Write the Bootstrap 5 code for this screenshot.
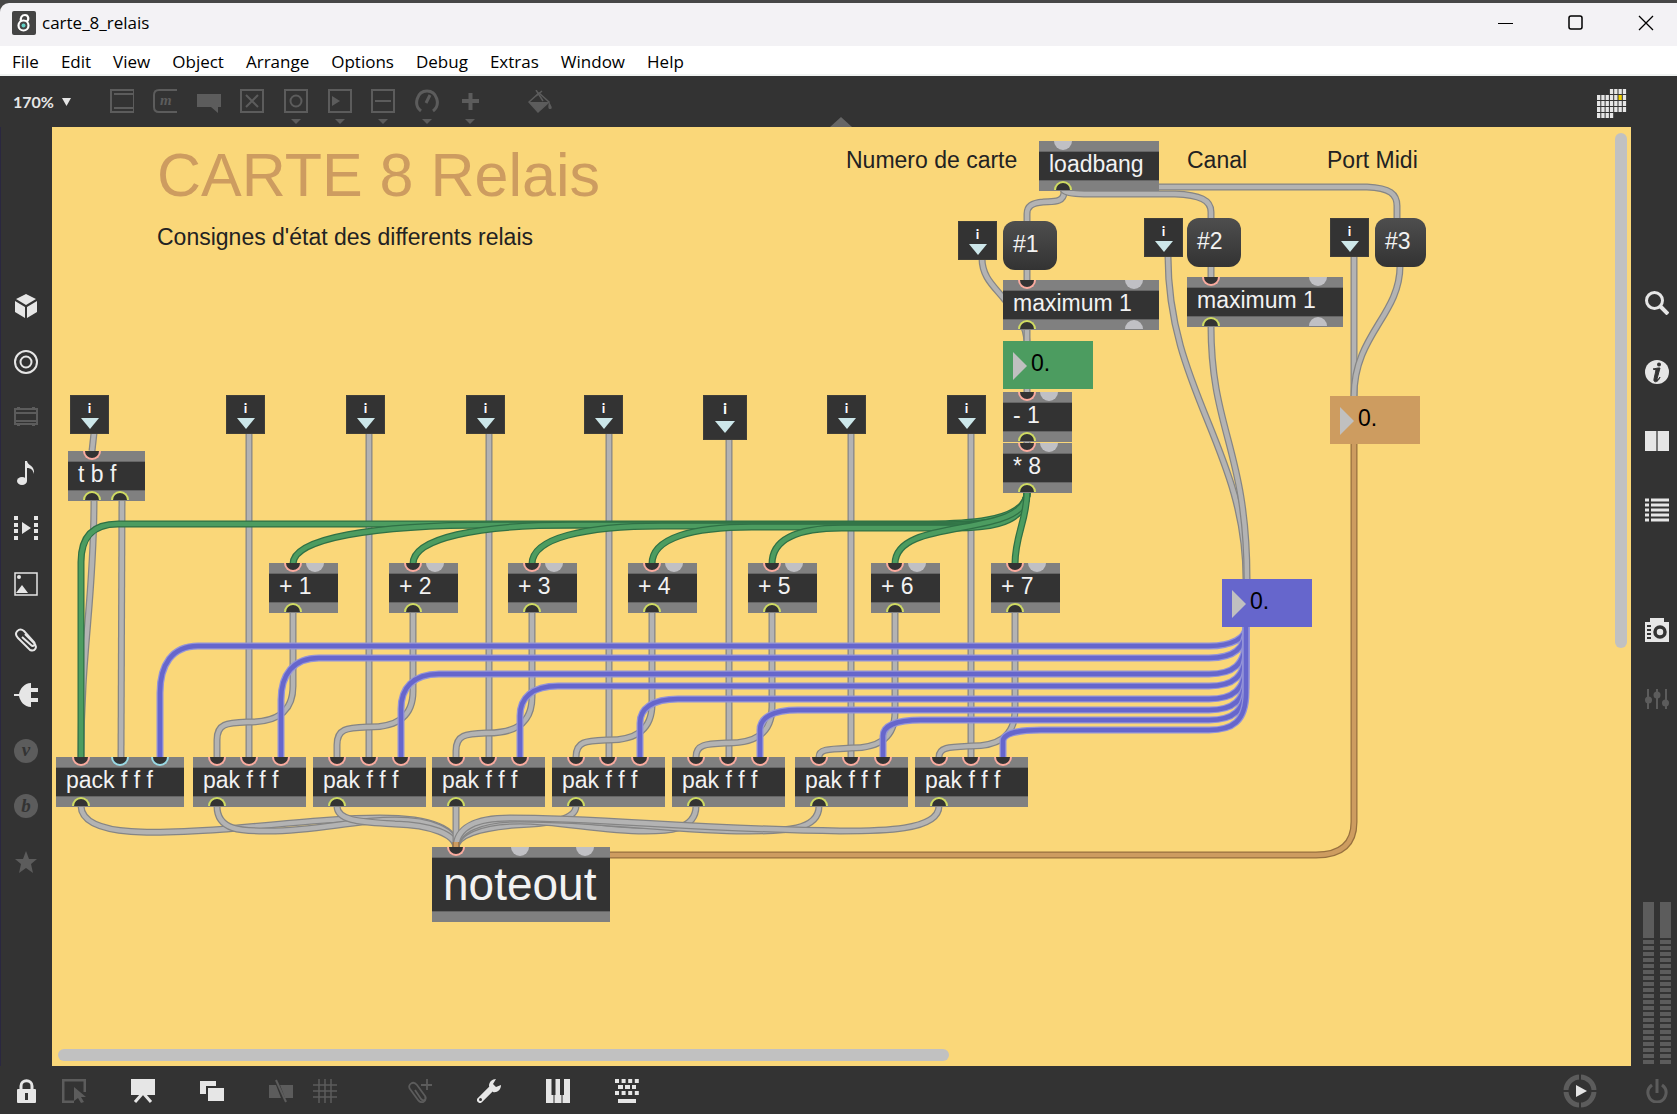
<!DOCTYPE html>
<html lang="fr">
<head>
<meta charset="utf-8">
<meta name="viewport" content="width=device-width, initial-scale=1">
<title>carte_8_relais</title>
<link href="https://cdn.jsdelivr.net/npm/bootstrap@5.3.0/dist/css/bootstrap.min.css" rel="stylesheet">
<style>
:root { --dark:#333; --dim:#5c5c5c; --lit:#e6e6e6; --sand:#fad779; }
body { background:var(--dark); font-family:"Open Sans","Noto Sans",sans-serif; }
svg { display:block; flex:none; }
.desk { background:#474747; padding-top:3px; }
.titlebar { height:43px; background:#f3f2f5; border-top-left-radius:9px; padding:0 0 3px 12px; color:#000; font-size:17px; }
.titlebar span { padding-left:6px; }
.winbtn { width:70px; height:38px; color:#000; }
.winbtn:last-child { width:62px; margin-left:4px; }
.menubar { height:30px; background:#fff; padding-left:1px; border-bottom:2px solid #f0f3f2; }
.menubar a { color:#000; font-size:17px; line-height:24px; padding:4px 11px 0; }
.toolbar { height:51px; }
.zoomctl { padding-left:13px; }
.zoombox { width:44px; padding:0; border:0; background:none; appearance:none; color:var(--lit); font:bold 16px Lato,sans-serif; }
.toolset { width:392px; margin-left:27px; }
.iconbtn { padding:0; border:0; background:none; color:var(--lit); line-height:0; }
.tool { height:51px; color:var(--dim); padding:13px 0 0; display:flex; flex-direction:column; align-items:center; }
.tool.drop::after { content:""; display:block; margin-top:6px; border:5px solid transparent; border-top-color:var(--dim); border-bottom:0; }
.off { color:var(--dim); }
.fillbtn { margin-left:36px; }
.pulltab { left:50%; bottom:0; margin-left:14px; border:11px solid transparent; border-bottom:10px solid #666; border-top:0; }
.rail-left { width:52px; border-left:1px solid #2a2740; padding:167px 1px 0 0; }
.rail-icons { height:580px; }
.rail-right { width:46px; padding:215px 0 2px 6px; }
.rail-right .stack { gap:45px; }
.camera { margin-top:51px; }
.meters { gap:6px; }
.meterbar { width:11px; height:162px; background:linear-gradient(#5c5c5c 0 36px,#333 36px 38px,transparent 38px),repeating-linear-gradient(#5c5c5c 0 4px,#333 4px 6px); background-position:0 0,0 38px; background-repeat:no-repeat; }
.statusbar { height:48px; padding:2px 8px 0 14px; }
.statusbar .pods { gap:45px; }
.statusbar .pair { gap:20px; }
.statusbar .pod-gap { margin-left:26px; }
.patcher { background:var(--sand); font-family:"Liberation Sans",Arial,sans-serif; font-size:23px; min-width:0; }
.patcher > .sheet { inset:0; }
.vbar { right:4px; top:6px; width:12px; height:515px; border-radius:6px; background:#c1c1c1; }
.hbar { left:6px; bottom:5px; height:12px; width:891px; border-radius:6px; background:#c1c1c1; }
.item { position:absolute; white-space:nowrap; }
.note { line-height:28px; color:#222; }
.heading { font-size:61px; line-height:70px; color:#cd9c60; font-weight:400; margin:0; }
.obj { background:#808080; height:50px; padding:11px 0; color:#f2f2f2; }
.obj .txt { background:#333; height:28px; line-height:24px; padding-left:10px; box-shadow:0 -1px #666,0 1px #666; }
.obj.big { height:75px; font-size:46px; }
.obj.big .txt { height:53px; line-height:52px; padding-left:11px; }
.port { position:absolute; width:18px; height:9px; margin-left:-9px; background:#c0c0c4; }
.port.in { top:0; border-radius:0 0 9px 9px; }
.port.out { bottom:1px; border-radius:9px 9px 0 0; }
.port.hot,.port.cold { background:#333; border:2px solid #fbab9f; border-top:0; }
.port.cold { border-color:#9adbe6; }
.port.sig { background:#333; border:2px solid #d0dc62; border-bottom:0; }
.msg { height:49px; border:0; border-radius:12px; background:linear-gradient(#4e4e4e,#333); color:#f2f2f2; text-align:left; padding:0 0 2px 10px; }
.inl { width:39px; height:39px; background:#333; box-shadow:inset 0 0 0 1px #403e38; color:#fff; font:bold 14px/18px Lato,sans-serif; text-align:center; padding-top:4px; }
.inl::after { content:""; display:block; width:18px; margin:1px auto 0; border:9px solid transparent; border-top:11px solid #cde7ea; border-bottom:0; }
.inl.wide { width:44px; height:45px; font-size:16px; }
.inl.wide::after { margin-top:4px; border-width:12px 10px 0; width:20px; }
.num { width:90px; height:48px; }
.num.green { background:#4c9c60; } .num.tan { background:#cd9c60; } .num.violet { background:#6666cc; }
.num::before { content:""; position:absolute; left:10px; top:11px; border:14px solid transparent; border-left:14px solid #c0c0c0; border-right:0; }
.num input { width:90px; height:45px; padding:0 0 0 28px; border:0; background:none; color:#000; }
</style>
</head>
<body class="vh-100 overflow-hidden d-flex flex-column">

<header class="desk flex-shrink-0">
  <div class="titlebar d-flex align-items-center">
    <svg width="24" height="24" viewBox="0 0 24 24"><rect width="24" height="24" rx="2" fill="#444"/><g fill="none" stroke="#fff" stroke-width="2.2"><circle cx="11.500" cy="14.500" r="5"/><path d="M9 10.500c-1-4 1-6.500 4-6.500 3.500 0 4.500 4.500 1.500 7"/></g><circle cx="11.500" cy="14.500" r="2" fill="#62d2c8"/></svg>
    <span>carte_8_relais</span>
    <div class="ms-auto d-flex">
      <button class="iconbtn winbtn d-flex align-items-center justify-content-center" aria-label="Minimize"><svg width="16" height="16"><path d="M0 8.500h15" stroke="#000"/></svg></button>
      <button class="iconbtn winbtn d-flex align-items-center justify-content-center" aria-label="Maximize"><svg width="16" height="16"><rect x="1" y="1" width="13" height="13" rx="2" fill="none" stroke="#000" stroke-width="1.500"/></svg></button>
      <button class="iconbtn winbtn d-flex align-items-center justify-content-center" aria-label="Close"><svg width="16" height="16"><path d="M1 1l14 14M15 1L1 15" stroke="#000" stroke-width="1.300"/></svg></button>
    </div>
  </div>
</header>

<nav class="menubar d-flex flex-shrink-0">
  <a class="text-decoration-none" href="#">File</a><a class="text-decoration-none" href="#">Edit</a><a class="text-decoration-none" href="#">View</a><a class="text-decoration-none" href="#">Object</a><a class="text-decoration-none" href="#">Arrange</a><a class="text-decoration-none" href="#">Options</a><a class="text-decoration-none" href="#">Debug</a><a class="text-decoration-none" href="#">Extras</a><a class="text-decoration-none" href="#">Window</a><a class="text-decoration-none" href="#">Help</a>
</nav>

<div class="d-flex flex-grow-1 overflow-hidden">
  <div class="d-flex flex-column flex-grow-1 overflow-hidden">
    <div class="toolbar d-flex align-items-center position-relative flex-shrink-0">
      <label class="zoomctl d-flex align-items-center"><select class="zoombox" aria-label="Zoom"><option>170%</option></select>
        <svg class="ms-1" width="12" height="10"><path d="M1 1h9l-4.500 8z" fill="#e6e6e6"/></svg></label>
      <div class="toolset d-flex">
        <button class="iconbtn tool flex-fill"><svg width="24" height="24" fill="none" stroke="currentColor" stroke-width="2"><path d="M1 0v24M0 1h24M4 5h20M4 19h20M0 23h24"/><path d="M23.500 1v22" stroke-width="1"/></svg></button>
        <button class="iconbtn tool flex-fill"><svg width="24" height="24" fill="none" stroke="currentColor" stroke-width="2"><path d="M24 1H6Q1 1 1 6v12q0 5 5 5h18"/><text x="7" y="16" font-family="Liberation Serif,serif" font-style="italic" font-weight="bold" font-size="15" fill="currentColor" stroke="none">m</text></svg></button>
        <button class="iconbtn tool flex-fill"><svg width="24" height="24" fill="currentColor"><path d="M0 5h24v13h-3v6l-7-6H0z"/></svg></button>
        <button class="iconbtn tool flex-fill"><svg width="24" height="24" fill="none" stroke="currentColor" stroke-width="2"><rect x="1" y="1" width="22" height="22"/><path d="M6 6l12 12M18 6L6 18"/></svg></button>
        <button class="iconbtn tool drop flex-fill"><svg width="24" height="24" fill="none" stroke="currentColor" stroke-width="2"><rect x="1" y="1" width="22" height="22"/><circle cx="12" cy="12" r="5.500"/></svg></button>
        <button class="iconbtn tool drop flex-fill"><svg width="24" height="24" fill="none" stroke="currentColor" stroke-width="2"><rect x="1" y="1" width="22" height="22"/><path d="M4 7l8 5-8 5z" fill="currentColor" stroke="none"/></svg></button>
        <button class="iconbtn tool drop flex-fill"><svg width="24" height="24" fill="none" stroke="currentColor" stroke-width="2"><rect x="1" y="1" width="22" height="22"/><path d="M4 12h16"/></svg></button>
        <button class="iconbtn tool drop flex-fill"><svg width="24" height="24" fill="none" stroke="currentColor" stroke-width="3"><path d="M6 22C-2 16 2 2 12 2s14 14 6 20M11 14l4-8"/></svg></button>
        <button class="iconbtn tool drop flex-fill"><svg width="24" height="24" fill="none" stroke="currentColor" stroke-width="4"><path d="M4 12h17M12.500 4v17"/></svg></button>
      </div>
      <button class="iconbtn off fillbtn"><svg width="24" height="24" viewBox="0 1 24 24"><path d="M1 13L11 4l10 9-11 10z" fill="none" stroke="currentColor" stroke-width="1.500"/><path d="M1 13h20L10 23zM21 13c4 6 3 7 1 7s-2-2-1-7z" fill="currentColor"/><path d="M8 1l7 11M14 2l-6 5" stroke="currentColor" stroke-width="1.500"/></svg></button>
      <div class="pulltab position-absolute"></div>
      <button class="iconbtn ms-auto me-1 pt-1" aria-label="Calendar"><svg id="cells" width="30" height="30"></svg></button>
    </div>
    <div class="d-flex flex-grow-1 overflow-hidden">
      <div class="rail-left flex-shrink-0">
        <div class="rail-icons d-flex flex-column align-items-center justify-content-between">
          <button class="iconbtn"><svg width="24" height="24" fill="currentColor"><path d="M12 0l10 5-10 6L2 5zM1 7l10 6v11L1 18zM23 7l-10 6v11l10-6z"/></svg></button>
          <button class="iconbtn"><svg width="24" height="24" fill="none" stroke="currentColor" stroke-width="2"><circle cx="12" cy="12" r="11"/><circle cx="12" cy="12" r="5.500"/></svg></button>
          <button class="iconbtn off"><svg width="24" height="24" fill="none" stroke="currentColor" stroke-width="2"><rect x="1" y="4" width="22" height="15"/><path d="M1 8h22M1 16h22M3 3h3M18 3h3M3 20h3M18 20h3"/></svg></button>
          <button class="iconbtn"><svg width="24" height="24" fill="currentColor"><ellipse cx="8" cy="20" rx="5" ry="4"/><path d="M11 0h2c1 5 8 4 7 13-1-4-3-6-7-6v13h-2z"/></svg></button>
          <button class="iconbtn"><svg width="24" height="24" fill="currentColor"><path d="M8 6l9 6-9 6zM0 0h4v4H0zM0 7h4v4H0zM0 13h4v4H0zM0 20h4v4H0zM20 0h4v4h-4zM20 7h4v4h-4zM20 13h4v4h-4zM20 20h4v4h-4z"/></svg></button>
          <button class="iconbtn"><svg width="24" height="24" fill="currentColor"><rect x="1" y="1" width="22" height="22" fill="none" stroke="currentColor" stroke-width="1.500"/><circle cx="5" cy="5" r="2"/><path d="M8 13l6 8H2z"/></svg></button>
          <button class="iconbtn"><svg width="24" height="24" fill="none" stroke="currentColor" stroke-width="2"><path d="M11 6l9 9c4 4 1 9-4 7L4 10C-1 5 5-1 10 3l10 11c2 3-1 5-3 3L8 9"/></svg></button>
          <button class="iconbtn"><svg width="24" height="24" fill="currentColor"><path d="M0 11h5c1-5 5-11 12-11v5h7v4h-7v6h7v4h-7v5C10 24 6 18 5 13H0z"/></svg></button>
          <button class="iconbtn off"><svg width="24" height="24"><circle cx="12" cy="12" r="12" fill="currentColor"/><text x="12" y="17" text-anchor="middle" font-family="Liberation Serif,serif" font-style="italic" font-weight="bold" font-size="19" fill="#333">v</text></svg></button>
          <button class="iconbtn off"><svg width="24" height="24"><circle cx="12" cy="12" r="12" fill="currentColor"/><text x="12" y="18" text-anchor="middle" font-family="Liberation Serif,serif" font-style="italic" font-weight="bold" font-size="19" fill="#333">b</text></svg></button>
          <button class="iconbtn off"><svg width="24" height="24" fill="currentColor"><path d="M12 1l3 8h8l-6 5 2 9-7-5-7 5 2-9-6-5h8z"/></svg></button>
        </div>
      </div>
      <main class="patcher flex-grow-1 position-relative overflow-hidden">
        <svg id="wires" class="sheet position-absolute w-100 h-100" fill="none"></svg>
        <div id="nodes" class="sheet position-absolute"></div>
        <div class="vbar position-absolute"></div>
        <div class="hbar position-absolute"></div>
      </main>
    </div>
  </div>
  <aside class="rail-right flex-shrink-0 d-flex flex-column align-items-center">
    <div class="stack d-flex flex-column">
      <button class="iconbtn"><svg width="24" height="24" fill="none" stroke="currentColor"><circle cx="9.500" cy="9.500" r="8" stroke-width="3"/><path d="M15 15l8 8" stroke-width="4"/></svg></button>
      <button class="iconbtn"><svg width="24" height="24"><circle cx="12" cy="12" r="12" fill="currentColor"/><circle cx="14" cy="4.500" r="2" fill="#333"/><path d="M8 9l5-1h2l-3 11c0 1 1 1 3-2-2 6-7 6-6 2l2-9z" fill="#333" stroke="#333"/></svg></button>
      <button class="iconbtn"><svg width="24" height="24"><path d="M0 2h24v20H0z" fill="currentColor"/><path d="M12 2v20" stroke="#777" stroke-width="2"/></svg></button>
      <button class="iconbtn"><svg width="24" height="24" stroke="currentColor" stroke-width="3" stroke-dasharray="4 2 18 99"><path d="M0 2h24M0 7h24M0 12h24M0 17h24M0 22h24"/></svg></button>
      <button class="iconbtn camera"><svg width="24" height="24"><path d="M5 0h14v4h5v20H0V4h5z" fill="currentColor"/><circle cx="15" cy="14" r="5" fill="none" stroke="#333" stroke-width="3.500"/><path d="M2 8h4M2 12h4M2 16h4M2 20h4" stroke="#333" stroke-width="2"/></svg></button>
      <button class="iconbtn off"><svg width="24" height="24" fill="currentColor"><path d="M3 2v20M12 2v20M21 2v20" stroke="currentColor" stroke-width="2"/><circle cx="3.500" cy="13" r="3.500"/><circle cx="12" cy="8" r="3.500"/><circle cx="20.500" cy="16" r="3.500"/></svg></button>
    </div>
    <div class="meters mt-auto d-flex"><div class="meterbar"></div><div class="meterbar"></div></div>
  </aside>
</div>

<footer class="statusbar d-flex align-items-center flex-shrink-0">
  <button class="iconbtn me-4"><svg width="24" height="24"><path d="M7 12V7c0-7 11-7 11 0v5" fill="none" stroke="currentColor" stroke-width="3"/><rect x="3" y="10" width="19" height="14" rx="1" fill="currentColor"/><path d="M12.500 14v7" stroke="#333" stroke-width="3"/></svg></button>
  <div class="pods d-flex">
    <button class="iconbtn off"><svg width="24" height="24"><path d="M23 13V1H1v22h11" fill="none" stroke="currentColor" stroke-width="3"/><path d="M12 8l12 10h-5l3 5-3 1-3-5-4 3z" fill="currentColor"/></svg></button>
    <button class="iconbtn"><svg width="24" height="24"><path d="M0 0h24v16H0z" fill="currentColor"/><path d="M11 15l-7 8M13 15l7 8" stroke="currentColor" stroke-width="3"/></svg></button>
    <button class="iconbtn"><svg width="24" height="24" fill="currentColor"><path d="M0 2h16v5H6v8H0zM8 9h16v13H8z"/></svg></button>
    <div class="pair d-flex">
      <button class="iconbtn off"><svg width="24" height="24"><path d="M0 6h7l5 13H0zM11 6h13v13h-8z" fill="currentColor"/><path d="M7 1l10 22" stroke="currentColor" stroke-width="2"/></svg></button>
      <button class="iconbtn off"><svg width="24" height="24" stroke="currentColor" stroke-width="1.500"><path d="M6 0v24M12 0v24M18 0v24M0 6h24M0 12h24M0 18h24"/></svg></button>
    </div>
    <button class="iconbtn off pod-gap"><svg width="24" height="24" fill="none" stroke="currentColor" stroke-width="1.800"><path d="M7 11l6 9c3 3 6 0 4-3L9 6C5 1-1 6 2 10l8 11c3 4 9 2 7-3M19 0v11M13 6h11"/></svg></button>
    <button class="iconbtn"><svg width="24" height="24"><path d="M3 21L15 9" stroke="currentColor" stroke-width="6" stroke-linecap="round"/><path d="M12 7c0-4 3-7 7-7l-3 5 3 3 5-2c0 5-4 8-8 7z" fill="currentColor"/><circle cx="3.500" cy="20.500" r="1.500" fill="#333"/></svg></button>
    <button class="iconbtn"><svg width="24" height="24"><path d="M0 0h24v24H0z" fill="currentColor"/><path d="M8 0v24M16 0v24" stroke="#333"/><path d="M7.500 0v16M16 0v16" stroke="#333" stroke-width="4"/></svg></button>
    <button class="iconbtn"><svg width="24" height="24" stroke="currentColor" stroke-width="4"><path d="M0 2h24M0 14h24" stroke-dasharray="4 2.600"/><path d="M3 8h18" stroke-dasharray="5 2"/><path d="M3 22h18"/></svg></button>
  </div>
  <button class="iconbtn off ms-auto me-5"><svg width="34" height="34"><circle cx="17" cy="17" r="14" fill="none" stroke="currentColor" stroke-width="5"/><path d="M17 0v34M0 17h34" stroke="#333" stroke-width="2"/><path d="M13 11l11 6-11 6z" fill="#e6e6e6"/></svg></button>
  <button class="iconbtn off"><svg width="24" height="24" fill="none" stroke="currentColor" stroke-width="3"><path d="M7 6c-8 6-3 17 5 17S25 12 17 6M12 0v14"/></svg></button>
</footer>

<script src="https://cdn.jsdelivr.net/npm/bootstrap@5.3.0/dist/js/bootstrap.bundle.min.js"></script>
<script>
// Patch coordinates are window coordinates; the sheet starts at this corner.
const OX = 52, OY = 127;
const layer = document.getElementById('nodes');
function put(tag, cls, x, y, w, html) {
  const e = document.createElement(tag);
  e.className = 'item ' + cls;
  e.style.left = (x - OX) + 'px';
  e.style.top = (y - OY) + 'px';
  if (w) e.style.width = w + 'px';
  e.innerHTML = html;
  layer.appendChild(e);
  return e;
}
function obj(text, x, y, w, ins, outs, cls = '') {
  const e = put('div', 'obj ' + cls, x, y, w, '<div class="txt">' + text + '</div>');
  for (const [side, list] of [['in', ins], ['out', outs]])
    for (const [px, kind] of list) {
      const p = document.createElement('span');
      p.className = 'port ' + side + ' ' + kind;
      p.style.left = (px - x) + 'px';
      e.appendChild(p);
    }
}
put('h1', 'heading', 157, 140, 0, 'CARTE 8 Relais');
put('div', 'note', 157, 223, 0, "Consignes d'état des differents relais");
put('div', 'note', 846, 146, 0, 'Numero de carte');
put('div', 'note', 1187, 146, 0, 'Canal');
put('div', 'note', 1327, 146, 0, 'Port Midi');
obj('loadbang', 1039, 141, 120, [[1063, '']], [[1063, 'sig']]);
obj('maximum 1', 1003, 280, 156, [[1027, 'hot'], [1134, '']], [[1027, 'sig'], [1134, '']]);
obj('maximum 1', 1187, 277, 156, [[1211, 'hot'], [1318, '']], [[1211, 'sig'], [1318, '']]);
obj('- 1', 1003, 392, 69, [[1027, 'hot'], [1049, '']], [[1027, 'sig']]);
obj('* 8', 1003, 443, 69, [[1027, 'hot'], [1049, '']], [[1027, 'sig']]);
obj('t b f', 68, 451, 77, [[92, 'hot']], [[92, 'sig'], [120, 'sig']]);
const plus = [269, 389, 508, 628, 748, 871, 991];
plus.forEach((x, i) => obj('+ ' + (i + 1), x, 563, 69, [[x + 24, 'hot'], [x + 46, '']], [[x + 24, 'sig']]));
obj('pack f f f', 56, 757, 128, [[81, 'hot'], [120, 'cold'], [160, 'cold']], [[81, 'sig']]);
const pak = [193, 313, 432, 552, 672, 795, 915];
pak.forEach(x => obj('pak f f f', x, 757, 113, [[x + 24, 'hot'], [x + 56, 'hot'], [x + 88, 'hot']], [[x + 24, 'sig']]));
obj('noteout', 432, 847, 178, [[456, 'hot'], [520, ''], [585, '']], [], 'big');
[['#1', 1003, 221, 54], ['#2', 1187, 218, 54], ['#3', 1375, 218, 51]].forEach(m => put('button', 'msg', m[1], m[2], m[3], m[0]));
[[958, 221], [1144, 218], [1330, 218], [70, 395], [226, 395], [346, 395], [466, 395], [584, 395], [703, 395, 'wide'], [827, 395], [947, 395]]
  .forEach(p => put('div', 'inl ' + (p[2] || ''), p[0], p[1], 0, 'i'));
[['green', 1003, 341], ['tan', 1330, 396], ['violet', 1222, 579]]
  .forEach(n => put('div', 'num ' + n[0], n[1], n[2], 0, '<input type="text" value="0." aria-label="' + n[0] + '">'));

const inks = { grey: ['#858585', '#b3b3b3'], green: ['#2f7145', '#4c9c60'], violet: ['#9494d8', '#6666cc'], tan: ['#97703f', '#cd9c60'] };
let out = '';
function wire(d, ink = 'grey') {
  out += `<path d="${d}" stroke="${inks[ink][0]}" stroke-width="7"/><path d="${d}" stroke="${inks[ink][1]}" stroke-width="4.500"/>`;
}
wire('M1064 188V192C1064 204 1050 201 1043 202C1032 203 1027 206 1027 214V222');
wire('M1063 189C1063 195 1090 194 1110 194H1175C1200 195 1211 200 1211 212V219');
wire('M1150 187H1367C1390 188 1397 194 1397 206V219');
wire('M982 258C982 278 995 287 1005 300C1020 318 1026 325 1027 342');
wire('M1027 269V281'); wire('M1027 329V342'); wire('M1027 388V444'); wire('M1211 266V278');
wire('M1168 256C1168 390 1246 450 1246 579');
wire('M1211 326C1211 430 1247 450 1247 579');
wire('M1354 256V396'); wire('M1400 266C1400 315 1354 335 1354 396');
wire('M94 433L92 451'); wire('M94 500C94 600 81 650 81 757'); wire('M122 500L121 757');
[249, 369, 489, 609, 729, 851, 971].forEach(x => wire(`M${x} 433V757`));
[722, 727, 733, 740, 743, 748, 746].forEach((y, i) => {
  const a = plus[i] + 24, b = pak[i] + 24, m = pak[i] + 56;
  wire(`M${a} 612V${y - 36}C${a} ${y - 8} ${m + 25} ${y} ${m} ${y}C${m - 22} ${y + 1} ${b} ${y + 1} ${b} ${Math.min(757, y + 18)}V757`);
});
wire('M81 806C82 840 170 833 227 829C320 820 350 818 380 818C430 818 456 828 456 848');
wire('M217 806C217 832 245 831 268 831C320 831 350 820 395 820C430 820 456 830 456 848');
wire('M337 806C337 822 365 822 395 824C430 825 456 834 456 848');
wire('M456 806V848');
wire('M576 806C576 822 540 824 515 825C480 828 456 835 456 848');
wire('M696 806C696 831 665 831 645 831C600 831 560 821 520 821C480 821 456 832 456 848');
wire('M819 806C819 832 780 831 745 831C680 831 600 819 520 819C480 819 456 830 456 848');
wire('M939 806C939 831 880 831 840 831C700 829 600 818 510 818C475 818 456 828 456 848');
wire('M1027 492C1027 525 950 524 925 524H118C90 524 81 540 81 562V757', 'green');
[200, 160, 130, 100, 70].forEach((r, i) => {
  const x = plus[i] + 24, y = 525 + Math.floor(i * .8);
  wire(`M1027 492C1027 ${526 + i} 970 ${y} ${930 + i * 5} ${y}H${x + r}C${x + r * .4} ${y} ${x} 538 ${x} 564`, 'green');
});
wire('M1027 492C1027 540 895 515 895 564', 'green');
wire('M1027 492C1027 520 1015 535 1015 564', 'green');
[[160, 646], [281, 658], [401, 674], [520, 686], [640, 699], [760, 710], [883, 720], [1003, 730]].forEach(([x, y]) => {
  const r = Math.round((757 - y) * .42);
  wire(`M1246 626V${Math.max(627, y - 38)}C1246 ${y - 8} 1232 ${y} 1209 ${y}H${x + 38}C${x + 12} ${y} ${x} ${y + r * .4} ${x} ${y + r}V757`, 'violet');
});
wire('M1354 443V822C1354 845 1340 855 1316 855H600', 'tan');
wire('M456 842V848', 'tan');
document.getElementById('wires').innerHTML = `<g transform="translate(${-OX} ${-OY})">${out}</g>`;

let cells = '';
for (let r = 0; r < 5; r++) for (let c = 0; c < 7; c++) {
  if ((r === 0 && c < 3) || (r === 4 && c > 3)) continue;
  cells += `<rect x="${c * 4.3}" y="${r * 6}" width="3.300" height="5" fill="${r === 1 && c === 5 ? '#f0d000' : '#e6e6e6'}"/>`;
}
document.getElementById('cells').innerHTML = cells;
</script>
</body>
</html>
